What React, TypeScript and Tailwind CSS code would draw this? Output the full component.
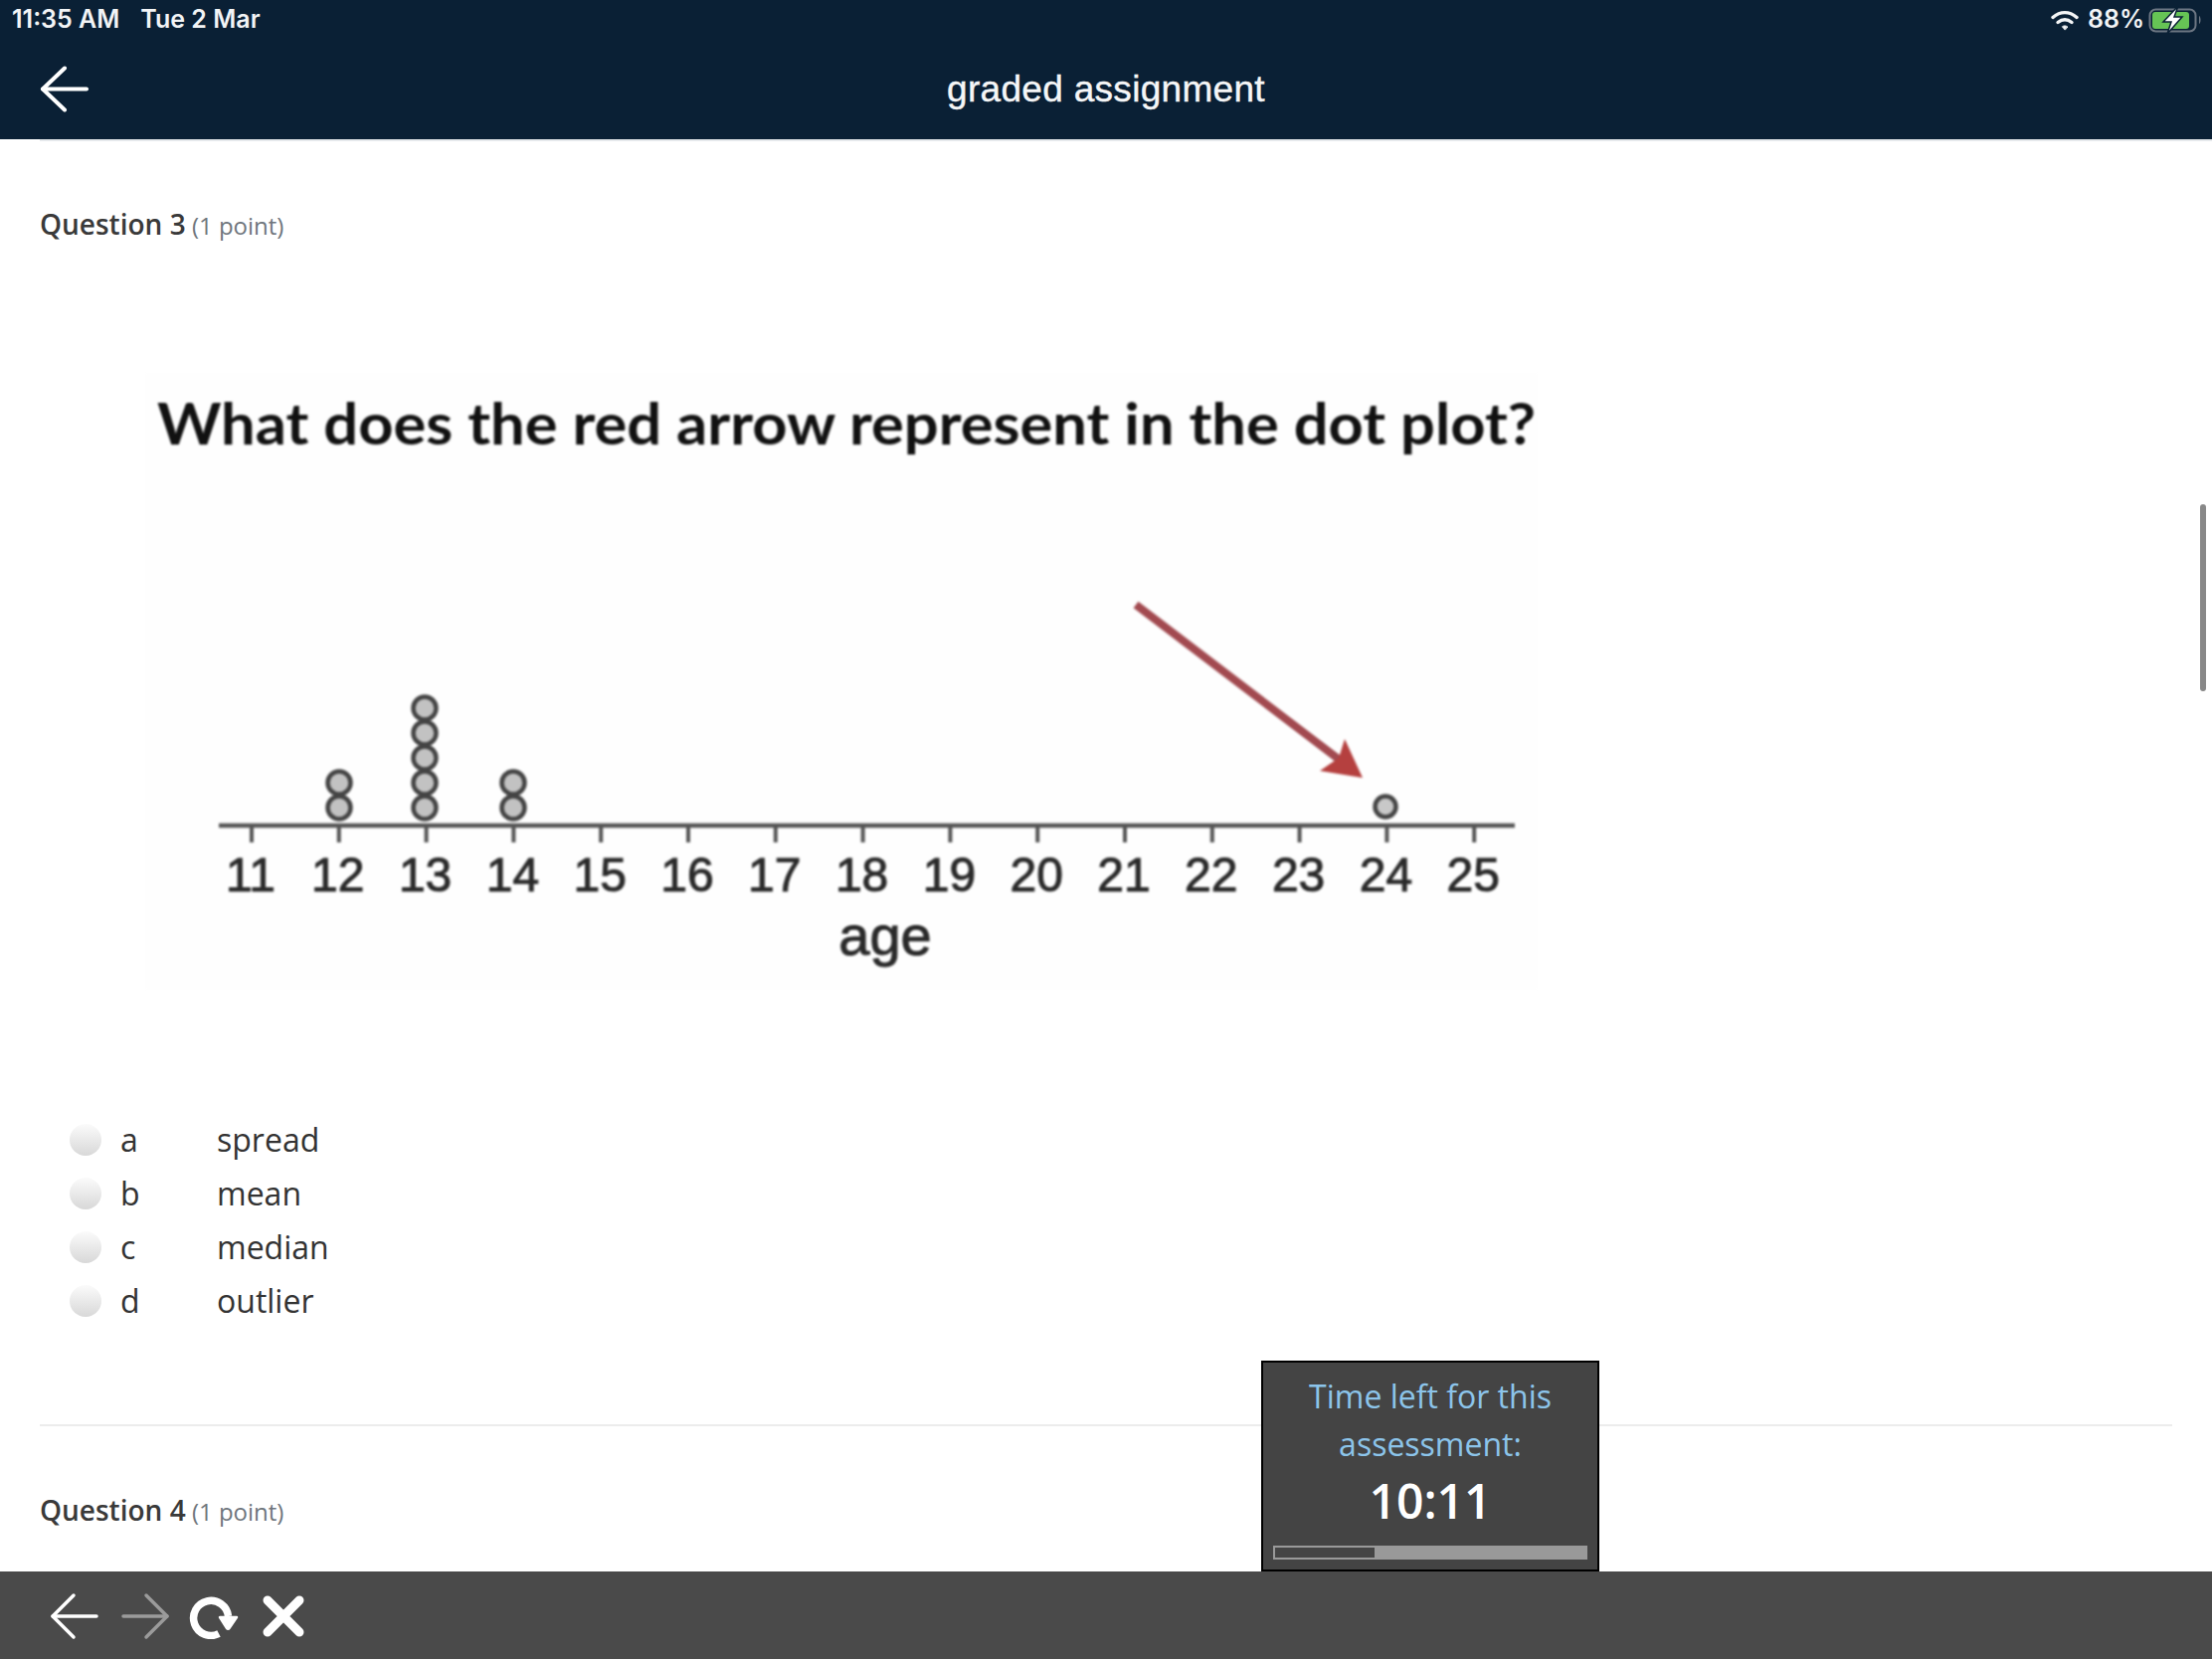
const ticks = Array.from({ length: 15 }, (_, i) => ({ n: 11 + i, x: 253 + i * 87.8 }));
const dots: [number, number][] = [
  [341, 812], [341, 787],
  [427, 812], [427, 787], [427, 762], [427, 737], [427, 712],
  [516, 812], [516, 787],
];

function Chart() {
  return (
    <svg viewBox="140 370 1420 630" width={1420} height={630} className="block ml-[140px] mt-[126px] blur-[1.1px]">
      <rect x="146" y="375" width="1400" height="620" fill="#fefefe" />
      <text x="158" y="447" fontFamily="Lato, sans-serif" fontWeight={700} fontSize="58" fill="#111" textLength="1386" lengthAdjust="spacingAndGlyphs">What does the red arrow represent in the dot plot?</text>
      <line x1="220" y1="830" x2="1523" y2="830" stroke="#555" strokeWidth="4.5" />
      {ticks.map((t) => (
        <g key={t.n}>
          <line x1={t.x} y1="830" x2={t.x} y2="847" stroke="#555" strokeWidth="4" />
          <text x={t.x - 1} y="896" textAnchor="middle" fontFamily="Liberation Sans, sans-serif" fontSize="48" fill="#2a2a2a" stroke="#2a2a2a" strokeWidth="1">{t.n}</text>
        </g>
      ))}
      {dots.map(([x, y], i) => (
        <circle key={i} cx={x} cy={y} r="11.5" fill="#c2c2c2" stroke="#444" strokeWidth="4.5" />
      ))}
      <circle cx="1393" cy="811" r="10.5" fill="#c8c8c8" stroke="#444" strokeWidth="4.5" />
      <text x="890" y="960" textAnchor="middle" fontFamily="Liberation Sans, sans-serif" fontSize="56" fill="#2a2a2a" stroke="#2a2a2a" strokeWidth="1">age</text>
      <line x1="1142" y1="608" x2="1360" y2="774" stroke="#a24a50" strokeWidth="8" />
      <polygon points="1370,782 1327,775 1346,762 1352,743" fill="#b5403f" />
    </svg>
  );
}

function Option({ l, t }: { l: string; t: string }) {
  return (
    <div className="flex items-center h-[54px] text-[32px] text-[#333]">
      <span className="w-8 h-8 rounded-full bg-gradient-to-b from-[#fbfbfb] to-[#d8d8d8] ml-[70px]" />
      <span className="w-[97px] ml-[19px]">{l}</span>
      <span>{t}</span>
    </div>
  );
}

function Heading({ n }: { n: number }) {
  return (
    <div className="h-9 leading-[34px] ml-10 whitespace-nowrap">
      <span className="text-[28px] font-semibold text-[#3a3a3a]">Question {n}</span>
      <span className="text-[24px] text-[#6f767d]"> (1 point)</span>
    </div>
  );
}

export default function App() {
  return (
    <div className="relative flex flex-col h-screen overflow-hidden bg-white font-['Open_Sans',sans-serif]">
      <header className="h-[140px] shrink-0 bg-[#0a2035] text-white">
        <div className="h-[40px] flex items-center justify-between pl-3 pr-[10px] font-['Inter',sans-serif] font-semibold text-[25px] text-[#f2f4f6]">
          <div className="flex gap-[21px]">
            <span>11:35 AM</span>
            <span>Tue 2 Mar</span>
          </div>
          <div className="flex items-center gap-[9px]">
            <svg width="28" height="21" viewBox="0 0 28 21" fill="none" stroke="#f5f6f7" strokeWidth="3.4" strokeLinecap="round">
              <path d="M2 7.5C9.5 1 18.5 1 26 7.5" />
              <path d="M7 12.5c4.5-3.6 9.5-3.6 14 0" />
              <path d="M14 19.8l-2.6-3c1.6-1.2 3.6-1.2 5.2 0z" fill="#f5f6f7" strokeWidth="1" strokeLinejoin="round" />
            </svg>
            <span>88%</span>
            <svg width="54" height="28" viewBox="0 0 54 28" className="-ml-[5px]">
              <rect x="1.5" y="3.5" width="46" height="22" rx="6" fill="none" stroke="#6d7683" strokeWidth="2" />
              <rect x="4" y="6" width="37" height="17" rx="3" fill="#66c455" />
              <path d="M51 10c2 .6 2 7.4 0 8z" fill="#6d7683" />
              <path d="M30 0L15 16h8L19 28l15-17h-8z" fill="#fff" stroke="#0a2035" strokeWidth="1.5" />
            </svg>
          </div>
        </div>
        <div className="h-[100px] flex items-center relative">
          <svg width="50" height="47" viewBox="0 0 50 47" fill="none" stroke="#fff" strokeWidth="4" strokeLinecap="round" strokeLinejoin="round" className="ml-[40px] -mt-[1px]">
            <path d="M47 23.5H3" />
            <path d="M25 2.5L3 23.5l22 21" />
          </svg>
          <h1 className="absolute inset-x-0 text-center font-['Liberation_Sans',sans-serif] text-[37px] tracking-[0.3px] text-[#f5f6f7] [-webkit-text-stroke:0.4px_#f5f6f7]">graded assignment</h1>
        </div>
      </header>
      <div className="h-[2px] ml-10 shrink-0 bg-[#e6e9ec]" />
      <main className="flex-1 min-h-0 overflow-hidden pt-[66px]">
        <Heading n={3} />
        <Chart />
        <div className="mt-[119px] mb-[97px]">
          <Option l="a" t="spread" />
          <Option l="b" t="mean" />
          <Option l="c" t="median" />
          <Option l="d" t="outlier" />
        </div>
        <div className="h-[2px] mx-10 mb-[67px] bg-[#ececec]" />
        <Heading n={4} />
      </main>
      <footer className="h-[88px] shrink-0 bg-[#4a4a4a] flex items-center pl-[50px] pt-[2px]">
        <svg width="50" height="48" viewBox="0 0 50 48" fill="none" stroke="#fff" strokeWidth="3.5" strokeLinecap="round" strokeLinejoin="round">
          <path d="M47 24H3" />
          <path d="M24 3L3 24l21 21" />
        </svg>
        <svg width="50" height="48" viewBox="0 0 50 48" fill="none" stroke="#9b9b9b" strokeWidth="3.5" strokeLinecap="round" strokeLinejoin="round" className="ml-[21px]">
          <path d="M3 24h44" />
          <path d="M26 3l21 21-21 21" />
        </svg>
        <svg width="50" height="46" viewBox="0 0 50 46" className="ml-[19px]">
          <path d="M30 40.5A17.5 17.5 0 1 1 39.5 23" fill="none" stroke="#fff" strokeWidth="7.5" />
          <path d="M31 24h17l-7.5 11a1.5 1.5 0 0 1-2.5 0z" fill="#fff" stroke="#fff" strokeWidth="2.5" strokeLinejoin="round" />
        </svg>
        <svg width="42" height="42" viewBox="0 0 42 42" fill="none" stroke="#fff" strokeWidth="9" strokeLinecap="round" className="ml-[24px]">
          <path d="M5 5l32 32M37 5L5 37" />
        </svg>
      </footer>
      <div className="absolute left-[2212px] top-[507px] w-[6px] h-[188px] rounded-full bg-[#888]" />
      <aside className="absolute left-[1268px] top-[1368px] w-[340px] h-[212px] border-2 border-black bg-[#444] flex flex-col items-center">
        <div className="text-[32px] leading-[48px] mt-[10px] text-[#8cc4ea] text-center">Time left for this<br />assessment:</div>
        <div className="text-[48px] leading-[60px] mt-[3px] font-semibold text-white">10:11</div>
        <div className="mt-[15px] w-[316px] h-[14px] bg-[#999] p-[2px]">
          <div className="w-[100px] h-full bg-[#444]" />
        </div>
      </aside>
    </div>
  );
}
